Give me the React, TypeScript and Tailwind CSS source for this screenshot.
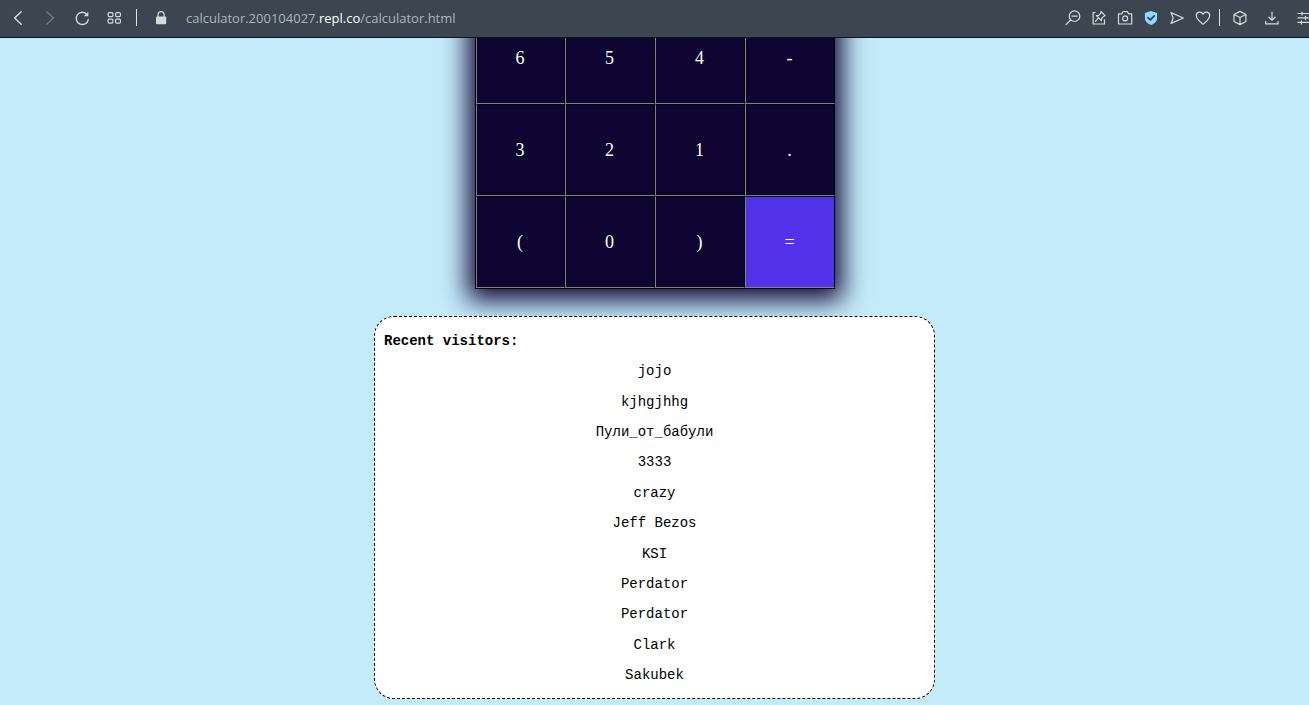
import type { ReactNode } from "react";

const KEYS = ["6", "5", "4", "-", "3", "2", "1", ".", "(", "0", ")", "="];

const VISITORS = [
  "jojo",
  "kjhgjhhg",
  "Пули_от_бабули",
  "3333",
  "crazy",
  "Jeff Bezos",
  "KSI",
  "Perdator",
  "Perdator",
  "Clark",
  "Sakubek",
];

function Icon({ children }: { children: ReactNode }) {
  return (
    <svg
      className="size-4 shrink-0"
      viewBox="0 0 16 16"
      fill="none"
      stroke="currentColor"
      strokeWidth="1.2"
      strokeLinecap="round"
      strokeLinejoin="round"
      aria-hidden="true"
    >
      {children}
    </svg>
  );
}

function NavButton({ label, dim, children }: { label: string; dim?: boolean; children: ReactNode }) {
  return (
    <button
      type="button"
      aria-label={label}
      className={dim ? "flex w-8 shrink-0 justify-center text-[#6f7982]" : "flex w-8 shrink-0 justify-center"}
    >
      <Icon>{children}</Icon>
    </button>
  );
}

function PageButton({ label, children }: { label: string; children: ReactNode }) {
  return (
    <button type="button" aria-label={label} className="flex w-[26px] shrink-0 justify-center">
      <Icon>{children}</Icon>
    </button>
  );
}

function BrowserBar() {
  return (
    <header className="flex h-[38px] shrink-0 items-center overflow-hidden border-b border-[#0e1418] bg-[#3b4650] pb-0.5 pl-0.5 text-[#d5dbdc]">
      <nav className="flex items-center" aria-label="Navigation">
        <NavButton label="Back">
          <path d="M11.2 1.8 4.6 8l6.6 6.2" strokeWidth="1.5" />
        </NavButton>
        <NavButton label="Forward" dim>
          <path d="M4.8 1.8 11.4 8l-6.6 6.2" strokeWidth="1.3" />
        </NavButton>
        <NavButton label="Reload">
          <path d="M13.1 4.6A6.1 6.1 0 1 0 14.3 9.6" strokeWidth="1.4" />
          <path d="M14.3 1.8v4.4H9.8z" fill="currentColor" stroke="none" />
        </NavButton>
        <NavButton label="Speed dial">
          <rect x="2.1" y="2.6" width="4.8" height="4" rx="1" />
          <rect x="9.6" y="2.6" width="4.8" height="4" rx="1" />
          <rect x="2.1" y="9.1" width="4.8" height="4" rx="1" />
          <rect x="9.6" y="9.1" width="4.8" height="4" rx="1" />
        </NavButton>
      </nav>
      <span className="ml-1.5 h-[17px] w-px bg-[#dfe4e4]" />
      <button type="button" aria-label="Site security" className="ml-4">
        <Icon>
          <rect x="3" y="6.6" width="10.2" height="7.6" rx="1" fill="currentColor" stroke="none" />
          <path d="M5.1 7V4.6a3 3 0 0 1 6 0V7" />
        </Icon>
      </button>
      <a
        href="#calculator"
        className="ml-[17px] truncate font-['Open_Sans','Noto_Sans',sans-serif] text-[13px] leading-5 text-[#a9b7c2]"
      >
        calculator.200104027.<span className="text-white">repl.co</span>/calculator.html
      </a>

      <div className="ml-auto flex shrink-0 items-center">
        <PageButton label="Zoom out">
          <circle cx="9.5" cy="6.2" r="5.3" />
          <path d="M7 6.2h5M5.7 10 1 14.7" />
        </PageButton>
        <PageButton label="Easy setup">
          <path d="M4.2 2.5H2.1v11.5h11.4V9.8" />
          <path d="M9.9 1.5l4.2 4.2-1.2.5-2.2 2.2-.3 2.2-5-5 2.3-.3 2.1-2.2zM7.4 8.2l-3 3.1" />
        </PageButton>
        <PageButton label="Snapshot">
          <path d="M1.5 3.9h3.2l1.2-2.2h4.6l1.2 2.2h3v10.1H1.5z" />
          <circle cx="8.1" cy="8.4" r="2.5" />
        </PageButton>
        <PageButton label="Protection">
          <path
            d="M8 .9 14.1 3v4.8c0 3.5-2.3 5.8-6.1 7.2C4.2 13.6 1.9 11.3 1.9 7.800V3z"
            fill="#8fd8ff"
            stroke="none"
          />
          <path d="M5 7.6l2.3 2.2 4-4" stroke="#2f4350" strokeWidth="1.7" />
        </PageButton>
        <PageButton label="Send to device">
          <path d="M2 2.6 14.4 8 2 13.4 4.2 8z" />
        </PageButton>
        <PageButton label="Bookmark">
          <path d="M8 14.4C4.5 11.6 1.3 9 1.3 5.6 1.3 1.6 6.2.9 8 4.2c1.8-3.3 6.700-2.600 6.700 1.400 0 3.400-3.200 6-6.700 8.800z" />
        </PageButton>
        <span className="ml-[3px] mr-1 h-[17px] w-px bg-[#dfe4e4]" />
        <NavButton label="Extensions">
          <path d="M8 1.4 13.9 4.5v7L8 14.6 2 11.5v-7zM2 4.5l6 3 5.9-3M8 7.5v7.1" />
        </NavButton>
        <NavButton label="Downloads">
          <path d="M8 2.2v7.9M4.900 7.2 8 10.2l3.1-3M1.700 11.3v2.500h12.400v-2.500" />
        </NavButton>
        <div className="-mr-[11px] flex">
          <NavButton label="Settings">
            <path d="M2 3.5h12M2 7.9h12M2 12.4h12M6 2v3M9.5 6.4v3M5.4 10.9v3" />
          </NavButton>
        </div>
      </div>
    </header>
  );
}

function Calculator() {
  return (
    <section
      id="calculator"
      aria-label="Calculator"
      className="-mt-[92px] w-[360px] shrink-0 self-center border-b border-l border-black bg-[#0e0533] pt-[66px] shadow-[0_4px_24px_7px_#0e0533]"
    >
      <div className="grid grid-cols-[89fr_90fr_90fr_90fr]">
        {KEYS.map((key) => (
          <button
            key={key}
            type="button"
            className={
              key === "="
                ? "h-[92px] border border-t-black border-r-black border-b-[#808080] border-l-[#808080] bg-[#5233ea] text-lg text-white"
                : "h-[92px] border border-t-black border-r-black border-b-[#808080] border-l-[#808080] text-lg text-white"
            }
          >
            {key}
          </button>
        ))}
      </div>
    </section>
  );
}

function Visitors() {
  return (
    <section className="relative mt-[27px] mb-1.5 flex w-[561px] max-w-full flex-1 flex-col justify-between self-center rounded-[20px] border border-dashed border-black bg-white px-[9px] pt-4 pb-[15px] font-['Liberation_Mono','Courier_New',monospace] text-sm leading-4 text-black">
      <h2 className="font-bold">Recent visitors:</h2>
      {VISITORS.map((name, index) => (
        <p key={index} className="text-center">
          {name}
        </p>
      ))}
    </section>
  );
}

export default function App() {
  return (
    <div className="flex min-h-screen flex-col bg-[#c4ebf9]">
      <BrowserBar />
      <main className="flex flex-1 flex-col overflow-hidden font-['Liberation_Serif','Times_New_Roman',serif]">
        <Calculator />
        <Visitors />
      </main>
    </div>
  );
}
